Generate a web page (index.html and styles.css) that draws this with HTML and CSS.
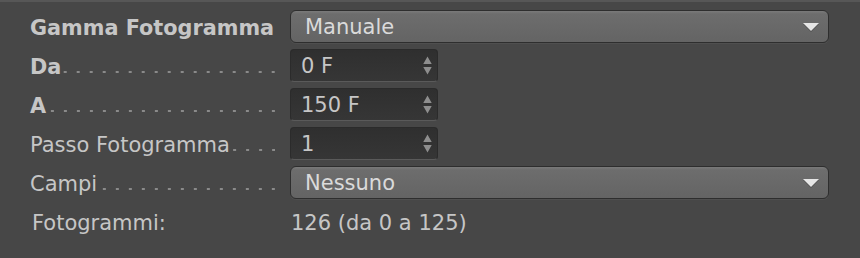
FILE: index.html
```html
<!DOCTYPE html>
<html lang="it">
<head>
    <meta charset="UTF-8">
    <title>Gamma Fotogramma</title>
    <link rel="stylesheet" href="styles.css">
</head>
<body>
    <div class="panel">
        <div class="form">
            <div class="label strong">Gamma Fotogramma</div>
            <div class="select">
                <span>Manuale</span>
                <svg class="caret" viewBox="0 0 16 8"><path d="M0 0H16L8 8Z"/></svg>
            </div>

            <div class="label strong">Da<span class="leader"></span></div>
            <div class="field">
                <span>0 F</span>
                <svg class="spin" viewBox="0 0 8 18"><path d="M0 7.5L4 0.5L8 7.5Z M0 10.5H8L4 17.5Z"/></svg>
            </div>

            <div class="label strong">A<span class="leader"></span></div>
            <div class="field">
                <span>150 F</span>
                <svg class="spin" viewBox="0 0 8 18"><path d="M0 7.5L4 0.5L8 7.5Z M0 10.5H8L4 17.5Z"/></svg>
            </div>

            <div class="label">Passo Fotogramma<span class="leader"></span></div>
            <div class="field">
                <span>1</span>
                <svg class="spin" viewBox="0 0 8 18"><path d="M0 7.5L4 0.5L8 7.5Z M0 10.5H8L4 17.5Z"/></svg>
            </div>

            <div class="label">Campi<span class="leader"></span></div>
            <div class="select">
                <span>Nessuno</span>
                <svg class="caret" viewBox="0 0 16 8"><path d="M0 0H16L8 8Z"/></svg>
            </div>

            <div class="label info">Fotogrammi:</div>
            <div class="value">126 (da 0 a 125)</div>
        </div>
    </div>
</body>
</html>
```

FILE: styles.css
```css
:root {
    --bg: #474747;
    --text: #c6c6c6;
    --text-light: #dadada;
    --dots: #8a8a8a;
}

* {
    box-sizing: border-box;
    margin: 0;
    padding: 0;
}

body {
    background: var(--bg);
    font-family: "DejaVu Sans", Verdana, sans-serif;
    font-size: 21px;
    color: var(--text);
}

.panel {
    border-top: 2px solid #575757;
    padding: 8px 31px 0 30px;
}

.form {
    display: grid;
    grid-template-columns: 245px 1fr;
    grid-auto-rows: 33px;
    column-gap: 15px;
    row-gap: 6px;
}

.label {
    display: flex;
    align-items: center;
    padding-top: 3px;
    white-space: nowrap;
}

.label.strong {
    font-weight: bold;
    font-size: 20.8px;
}

.label.info {
    padding-left: 2px;
}

.leader {
    flex: 1;
    height: 2px;
    margin: 10px 0 0 2px;
    background-image: linear-gradient(to right, transparent 0 10px, var(--dots) 10px 13px);
    background-size: 13px 2px;
    background-repeat: repeat-x;
    background-position: right top;
}

.select {
    display: flex;
    align-items: center;
    justify-content: space-between;
    padding: 0 9px 0 14px;
    border: 1px solid #2e2e2e;
    border-radius: 6px;
    background: linear-gradient(#7a7a7a 0, #6d6d6d 3px, #646464 100%);
    box-shadow: 0 1px 0 #4f4f4f;
    color: var(--text-light);
}

.caret {
    width: 16px;
    height: 8px;
    fill: #e6e6e6;
    filter: drop-shadow(0 1px 0 rgba(0, 0, 0, 0.25));
}

.field {
    width: 148px;
    display: flex;
    align-items: center;
    justify-content: space-between;
    padding: 0 5px 0 10px;
    border: 1px solid #2b2b2b;
    border-bottom-color: #5a5a5a;
    border-radius: 4px;
    background: linear-gradient(#2f2f2f, #363636);
    color: var(--text);
}

.spin {
    width: 9px;
    height: 19px;
    fill: #8e8e8e;
}

.value {
    display: flex;
    align-items: center;
    padding: 3px 0 0 1px;
}
```
